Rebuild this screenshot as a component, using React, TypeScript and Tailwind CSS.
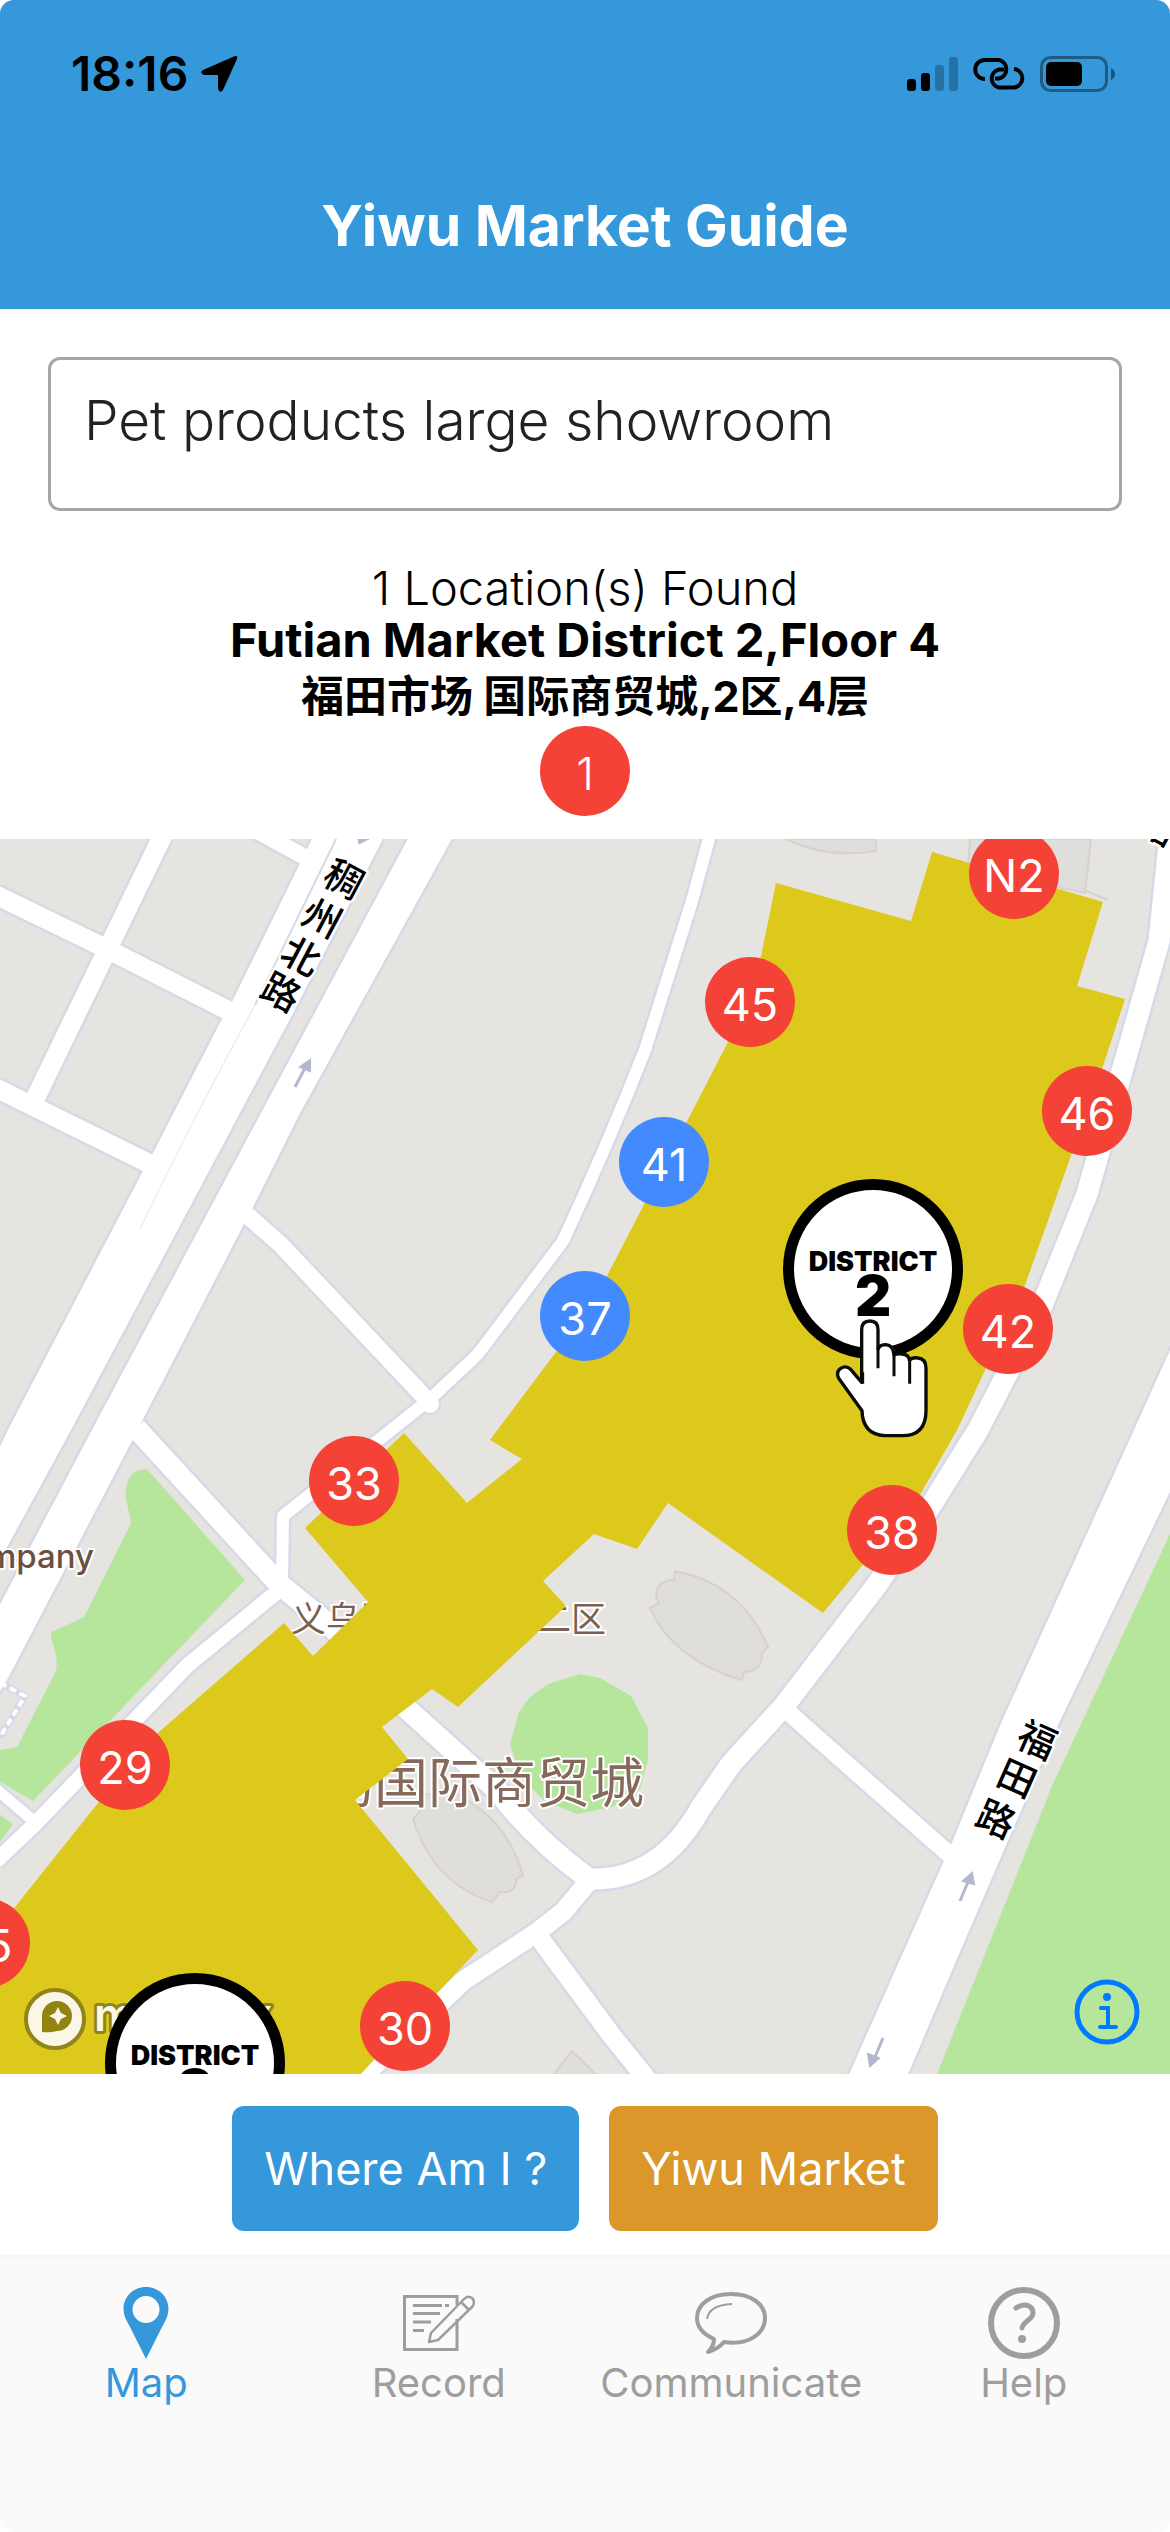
import React, { useState } from 'react';
import clsx from 'clsx';

// --- MAP DATA ---
// All map coordinates live on a 1170 x 1235 canvas.
const MAP_WIDTH = 1170;
const MAP_HEIGHT = 1235;

type Gate = { label: string; x: number; y: number; selected?: boolean };
type District = { id: number; x: number; y: number };
type Road = { d: string; width: number };

const gates: Gate[] = [
    { label: 'N2', x: 1014, y: 35 },
    { label: '45', x: 750, y: 163 },
    { label: '46', x: 1087, y: 272 },
    { label: '41', x: 664, y: 323, selected: true },
    { label: '37', x: 585, y: 477, selected: true },
    { label: '42', x: 1008, y: 490 },
    { label: '33', x: 354, y: 642 },
    { label: '38', x: 892, y: 691 },
    { label: '29', x: 125, y: 926 },
    { label: '25', x: -15, y: 1104 },
    { label: '30', x: 405, y: 1187 },
];

const districts: District[] = [
    { id: 2, x: 873, y: 430 },
    { id: 3, x: 195, y: 1224 },
];

const roads: Road[] = [
    { d: 'M163 -4 L34 262', width: 19 },
    { d: 'M-4 56 L107 110 L235 175', width: 19 },
    { d: 'M-4 249 L150 325', width: 19 },
    { d: 'M250 -12 L312 22', width: 16 },
    { d: 'M247 376 L281 406 L429 563', width: 17 },
    { d: 'M710 -4 L692 62 L645 211 Q606 310 563 402 L478 515 L429 561 L283 677 L282 744', width: 12 },
    { d: 'M136 589 L279 745 L333 789 L406 869 L497 951 Q534 1000 589 1040 Q660 1042 700 970 L731 925 L784 867 L876 747 L930 668 L978 591 L1041 469 L1087 355 L1121 236 L1159 102 L1170 -4', width: 21 },
    { d: 'M283 748 L188 826 L134 882 L34 986 L-4 1022', width: 15 },
    { d: 'M-4 950 L36 984', width: 11 },
    { d: 'M589 1042 L563 1073 L536 1094 L463 1142 L421 1182 L360 1240', width: 19 },
    { d: 'M538 1097 L612 1197 L650 1244', width: 19 },
    { d: 'M786 871 L815 897 L950 1016', width: 17 },
];

const avenues = [
    'M314 -4 L232 163 L222 180 L153 314 L143 332 L8 591 L-6 620 L-6 732 L71 591 L291 178 L385 -4 Z',
    'M410 -4 L214 362 L92 591 L-6 777 L-6 862 L8 839 L132 602 L142 582 L244 385 L253 368 L300 274 L454 -4 Z',
    'M1176 498 L1134 591 L1002 882 L951 1006 L943 1024 L847 1240 L906 1240 L953 1129 L1058 886 L1176 640 Z',
];

const parks = [
    'M147 630 L245 741 L33 962 L0 943 V911 L17 908 L55 834 Q60 822 51 800 Q50 792 54 792 L84 778 L131 684 L126 659 Q124 640 136 632 Z',
    'M0 976 L13 985 L0 1003 Z',
    'M548 845 L580 835 L600 839 L631 857 L648 889 V921 L640 950 L612 968 L577 975 L545 962 L520 938 L510 905 L519 873 L530 858 Z',
    'M1170 695 L1052 947 L937 1235 H1170 Z',
];

const buildings = [
    'M786 0 Q826 20 876 12 V0 Z',
    'M970 0 L968 28 L1085 54 L1091 0 Z',
    'M675 732 L674 741 Q656 741 656 758 L659 764 L650 769 Q673 821 742 841 L744 833 Q762 833 762 814 L768 808 Q742 745 675 732 Z',
    'M413 980 L422 970 L421 956 L453 953 Q508 980 523 1037 L516 1040 Q517 1055 500 1053 L492 1063 Q433 1044 413 980 Z',
    'M572 1212 L550 1240 H600 Z',
];

const marketArea =
    'M776 44 L911 82 L932 13 L1103 63 L1077 147 L1125 160 L1104 224 L1025 446 L957 591 L920 656 L823 774 L668 664 L637 710 L594 695 L543 742 L566 767 L458 868 L432 850 L382 888 L408 920 L355 961 L478 1111 L356 1240 H-4 V1092 L15 1068 L98 964 L159 893 L284 784 L313 817 L368 763 L305 689 L404 594 L467 664 L522 620 L490 601 L556 513 L607 437 L727 205 L761 117 Z';

const roadNames = [
    { char: '稠', x: 344, y: 40, angle: 28 },
    { char: '州', x: 322, y: 79, angle: 28 },
    { char: '北', x: 301, y: 117, angle: 28 },
    { char: '路', x: 281, y: 153, angle: 28 },
    { char: '路', x: 1158, y: -13, angle: 28 },
    { char: '福', x: 1037, y: 901, angle: 24 },
    { char: '田', x: 1017, y: 939, angle: 24 },
    { char: '路', x: 996, y: 980, angle: 24 },
];

const placeAt = (x: number, y: number) => ({
    left: `${(x / MAP_WIDTH) * 100}%`,
    top: `${(y / MAP_HEIGHT) * 100}%`,
});

// --- STATUS BAR ---
const StatusBar: React.FC = () => (
    <div className="flex h-9 items-center justify-between pl-[71px] pr-[54px]">
        <div className="flex items-center gap-3">
            <span className="text-[48px] font-semibold leading-9">18:16</span>
            <svg viewBox="0 0 38 38" className="h-[38px] w-[38px]" aria-hidden="true">
                <path d="M35 1 Q38 0 37 4 L23 35 Q20 39 18 34 L18 20 L4 20 Q-1 18 3 15 Z" />
            </svg>
        </div>
        <div className="flex items-center gap-[14px]">
            <svg viewBox="0 0 52 34" className="h-[34px] w-[52px]" aria-hidden="true">
                <rect x="0" y="22" width="9" height="12" rx="3" />
                <rect x="14" y="16" width="9" height="18" rx="3" />
                <rect x="28" y="8" width="9" height="26" rx="3" opacity=".25" />
                <rect x="42" y="0" width="9" height="34" rx="3" opacity=".25" />
            </svg>
            <svg viewBox="0 0 53 32" className="h-8 w-[53px]" fill="none" stroke="#000" strokeWidth="4" aria-hidden="true">
                <path d="M12 21 A9.500 9.500 0 0 1 11.500 2 H26 A9.500 9.500 0 0 1 26 20.500 H22" />
                <path d="M31 11.500 H26 A9.200 9.200 0 0 0 26 29.500 H41 A9.300 9.300 0 0 0 41 11" />
            </svg>
            <svg viewBox="0 0 76 36" className="h-9 w-[76px]" aria-hidden="true">
                <rect x="1.500" y="1.500" width="65" height="33" rx="9" fill="none" stroke="#000" strokeOpacity=".4" strokeWidth="3" />
                <rect x="6" y="6" width="36" height="24" rx="5" />
                <path d="M71 12 Q75 14 75 18 Q75 22 71 24 Z" opacity=".45" />
            </svg>
        </div>
    </div>
);

// --- MAP ---
const MapCanvas: React.FC = () => (
    <svg viewBox={`0 0 ${MAP_WIDTH} ${MAP_HEIGHT}`} className="block h-full w-full" aria-hidden="true">
        <rect width={MAP_WIDTH} height={MAP_HEIGHT} fill="#e5e4e0" />
        {parks.map(d => <path key={d} d={d} fill="#b5e69c" />)}
        {buildings.map(d => <path key={d} d={d} fill="#dfdeda" stroke="#d6d2cd" strokeWidth="2" />)}

        {/* Road casings first, so junctions stay open */}
        <g fill="none" stroke="#d6d9e8" strokeLinejoin="round">
            {roads.map(road => <path key={road.d} d={road.d} strokeWidth={road.width + 5} />)}
            {avenues.map(d => <path key={d} d={d} strokeWidth="5" />)}
            <circle cx="430" cy="565" r="9" strokeWidth="4" />
            <path d="M0 844 L25 857 L0 898" strokeWidth="7" />
        </g>
        <g fill="none" stroke="#fff" strokeLinejoin="round">
            {roads.map(road => <path key={road.d} d={road.d} strokeWidth={road.width} />)}
            <path d="M0 844 L25 857 L0 898" strokeWidth="4" strokeDasharray="7 4" />
        </g>
        <g fill="#fff">
            {avenues.map(d => <path key={d} d={d} />)}
            <circle cx="430" cy="565" r="9" />
        </g>
        <path d="M338 -4 L255 166" fill="none" stroke="#d6d9e8" strokeWidth="2" />
        <path d="M255 166 Q190 285 140 390" fill="none" stroke="#e3e5ef" strokeWidth="1" />

        {/* One-way arrows */}
        <g fill="#b4b8cf" stroke="#b4b8cf" strokeWidth="3">
            <path d="M295 248 L305 229" />
            <path d="M310 221 L300 228 L310 232 Z" strokeWidth="2" />
            <path d="M960 1062 L968 1043" />
            <path d="M972 1034 L963 1042 L974 1045 Z" strokeWidth="2" />
            <path d="M883 1199 L875 1218" />
            <path d="M870 1227 L868 1215 L879 1219 Z" strokeWidth="2" />
            <path d="M358 0 L359 5 L369 0 Z" strokeWidth="1" />
        </g>

        {/* Place names sit below the market overlay */}
        <g className="font-['Inter','Noto_Sans_CJK_SC',sans-serif]" stroke="#fff" strokeWidth="4" strokeLinejoin="round" paintOrder="stroke">
            <text x="94" y="729" textAnchor="end" fontSize="33" fontWeight="500" fill="#6b4f40">Company</text>
            <text x="291" y="793" fontSize="35" fill="#7a6052">义乌国际商贸城二区</text>
            <text x="266" y="964" fontSize="54" fill="#86695b">义乌国际商贸城</text>
        </g>
        <path d="M770 116 L784 46 M913 80 L934 12 M1108 61 L1082 50" stroke="#d6d2cd" strokeWidth="2" />
        <path d={marketArea} fill="#ddc81c" />

        <g className="font-['Noto_Sans_CJK_SC',sans-serif]" fontSize="38" fontWeight="500" textAnchor="middle" stroke="#fff" strokeWidth="5" strokeLinejoin="round" paintOrder="stroke">
            {roadNames.map(name => (
                <text key={`${name.char}-${name.x}`} transform={`translate(${name.x} ${name.y}) rotate(${name.angle})`} y="14">{name.char}</text>
            ))}
        </g>

        {/* Map provider mark */}
        <circle cx="55" cy="1180" r="29" fill="#faf7e6" stroke="#91841a" strokeWidth="4" />
        <path d="M42 1193 V1178 A15 15 0 1 1 57 1192 Q50 1194 42 1193 Z" fill="#918410" />
        <path d="M58 1168 L61 1174 L67 1177 L61 1180 L58 1186 L55 1180 L49 1177 L55 1174 Z" fill="#faf7e6" />
        <text x="94" y="1192" className="font-['Inter',sans-serif]" fontSize="46" fontWeight="600" fill="#faf7e6" stroke="#91841a" strokeWidth="6" strokeLinejoin="round" paintOrder="stroke">mapbox</text>
    </svg>
);

const GateMarker: React.FC<{ gate: Gate }> = ({ gate }) => (
    <button
        type="button"
        style={placeAt(gate.x, gate.y)}
        className={clsx(
            'absolute flex h-[90px] w-[90px] -translate-x-1/2 -translate-y-1/2 items-center justify-center rounded-full pt-1 text-[45px] leading-none text-white',
            gate.selected ? 'bg-[#448aff]' : 'bg-[#f44336]',
        )}
    >
        {gate.label}
    </button>
);

const DistrictBadge: React.FC<{ district: District }> = ({ district }) => (
    <button
        type="button"
        style={placeAt(district.x, district.y)}
        className="absolute flex h-[180px] w-[180px] -translate-x-1/2 -translate-y-1/2 flex-col items-center rounded-full border-[11px] border-black bg-white pt-[60px] font-black text-black"
    >
        <span className="text-[27px] leading-6">DISTRICT</span>
        <span className="text-[56px] leading-[44px]">{district.id}</span>
    </button>
);

const HandPointer: React.FC = () => (
    <svg viewBox="0 0 284 360" style={placeAt(882, 540)} className="pointer-events-none absolute h-[120px] w-[95px] -translate-x-1/2 -translate-y-1/2" aria-hidden="true">
        <path
            d="M81 190 V32 Q81 6 106 6 Q130 6 130 32 V90 Q136 77 154 77 Q176 79 178 108 Q188 103 202 105 Q224 107 224 124 Q233 114 250 117 Q274 119 274 148 V275 Q274 350 202 350 H150 Q84 347 82 275 L12 178 Q3 158 18 148 Q34 138 48 151 Z"
            fill="#fff"
            stroke="#0b0b05"
            strokeWidth="10"
            strokeLinejoin="round"
        />
        <path d="M130 85 V148 M178 105 V172 M225 122 V194 M84 160 V194" stroke="#0b0b05" strokeWidth="9" />
    </svg>
);

const MarketMap: React.FC = () => (
    <section aria-label="Market map" className="relative aspect-[1170/1235] w-full overflow-hidden">
        <MapCanvas />
        {gates.map(gate => <GateMarker key={gate.label} gate={gate} />)}
        {districts.map(district => <DistrictBadge key={district.id} district={district} />)}
        <HandPointer />
        <button type="button" aria-label="Map information" className="absolute bottom-[29px] right-[30px]">
            <svg viewBox="0 0 66 66" className="h-[66px] w-[66px]" fill="none" stroke="#007aff" strokeWidth="4">
                <circle cx="33" cy="33" r="30" strokeWidth="5" />
                <circle cx="33" cy="18" r="4" fill="#007aff" stroke="none" />
                <path d="M27 29 H34 V48 M26 48 H42" strokeLinecap="round" />
            </svg>
        </button>
    </section>
);

// --- TAB BAR ---
const PinIcon = () => (
    <svg viewBox="0 0 72 72" className="h-[72px] w-[72px]" fill="currentColor" aria-hidden="true">
        <path fillRule="evenodd" d="M36 0 C49 0 58.500 10 58.500 22 C58.500 28 56 33 53 38 L36 72 L19 38 C16 33 13.500 28 13.500 22 C13.500 10 23 0 36 0 Z M36 9 A13.500 13.500 0 1 0 36 36 A13.500 13.500 0 1 0 36 9 Z" />
    </svg>
);

const RecordIcon = () => (
    <svg viewBox="0 0 72 72" className="h-[72px] w-[72px]" fill="none" stroke="currentColor" strokeWidth="3" aria-hidden="true">
        <path d="M54 18 V9.500 H1.500 V62.500 H54 V32" />
        <path d="M10 18.500 H39 M42 18.500 H46 M10 26.500 H37 M10 35 H28 M10 43.500 H21" />
        <path d="M26 55 L28 46 L61 12 Q65 8 69 11 Q73 15 69 20 L35 53 Z M58 15 L66 23" strokeWidth="2.500" strokeLinejoin="round" />
    </svg>
);

const CommunicateIcon = () => (
    <svg viewBox="0 0 72 72" className="h-[72px] w-[72px]" fill="none" stroke="currentColor" strokeLinejoin="round" aria-hidden="true">
        <path d="M19 52 C8 47 2 40 2 31 C2 17 16 7 36 7 C56 7 70 17 70 31 C70 46 54 59 29 55 Q23 62 13 65 Q19 59 19 52 Z" strokeWidth="4" />
        <path d="M12 32 Q14 18 37 17" strokeWidth="2" />
    </svg>
);

const HelpIcon = () => (
    <svg viewBox="0 0 72 72" className="h-[72px] w-[72px]" fill="none" stroke="currentColor" aria-hidden="true">
        <circle cx="36" cy="36" r="33" strokeWidth="6" />
        <path d="M28 21 C37 15 45 19 45 26 C45 33 35 34 34 41" strokeWidth="5" strokeLinecap="round" />
        <circle cx="34" cy="52" r="4" fill="currentColor" stroke="none" />
    </svg>
);

const tabs = [
    { name: 'Map', icon: <PinIcon /> },
    { name: 'Record', icon: <RecordIcon /> },
    { name: 'Communicate', icon: <CommunicateIcon /> },
    { name: 'Help', icon: <HelpIcon /> },
];

const App: React.FC = () => {
    const [query, setQuery] = useState('Pet products large showroom');
    const [activeTab, setActiveTab] = useState('Map');

    return (
        <div className="flex min-h-screen flex-col bg-white font-['Inter','Noto_Sans_CJK_SC',sans-serif] text-black">
            <header className="rounded-t-[14px] bg-[#3498db] pb-[51px] pt-14">
                <StatusBar />
                <h1 className="mt-[102px] text-center text-[57px] font-bold leading-[64px] text-white">Yiwu Market Guide</h1>
            </header>

            <main>
                <div className="px-12 pt-12">
                    <textarea
                        aria-label="Search products"
                        value={query}
                        onChange={e => setQuery(e.target.value)}
                        rows={1}
                        className="block h-[154px] w-full resize-none overflow-hidden rounded-xl border-[3px] border-[#a6a6a6] bg-white px-[33px] pt-[30px] text-[55px] font-light leading-[60px] text-[#222] outline-none"
                    />
                </div>

                <div className="flex flex-col items-center pb-[23px] pt-[51px] text-center text-[47px]">
                    <p className="font-light leading-[52px]">1 Location(s) Found</p>
                    <p className="font-bold leading-[52px]">Futian Market District 2,Floor 4</p>
                    <p className="text-[43px] font-bold leading-[60px]">福田市场 国际商贸城,2区,4层</p>
                    <button type="button" className="flex h-[90px] w-[90px] items-center justify-center rounded-full bg-[#f44336] pt-1 text-[45px] font-light leading-none text-white">1</button>
                </div>

                <MarketMap />

                <div className="flex justify-center gap-[30px] py-8 pb-6 text-[45px] leading-[61px] text-white">
                    <button type="button" className="rounded-xl bg-[#3498db] px-8 py-8">Where Am I ?</button>
                    <button type="button" className="rounded-xl bg-[#db9729] px-8 py-8">Yiwu Market</button>
                </div>
            </main>

            <nav className="grid flex-1 grid-cols-4 rounded-b-[14px] border-t-4 border-[#f8f8f8] bg-[#fafafa] pt-7">
                {tabs.map(tab => (
                    <button
                        key={tab.name}
                        type="button"
                        onClick={() => setActiveTab(tab.name)}
                        className={clsx('flex flex-col items-center', activeTab === tab.name ? 'text-[#3498db]' : 'text-[#9e9e9e]')}
                    >
                        {tab.icon}
                        <span className="text-[40px] leading-[48px]">{tab.name}</span>
                    </button>
                ))}
            </nav>
        </div>
    );
};

export default App;
